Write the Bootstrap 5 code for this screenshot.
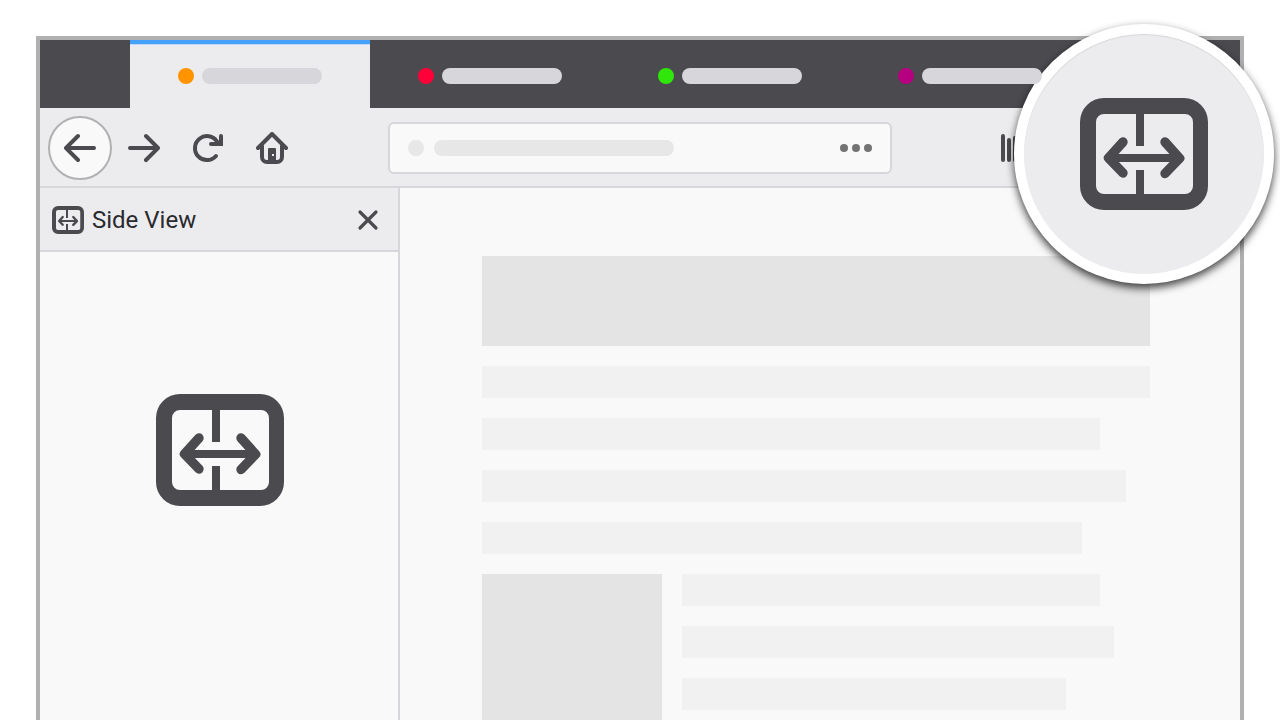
<!DOCTYPE html>
<html lang="en">
<head>
<meta charset="utf-8">
<meta name="viewport" content="width=device-width, initial-scale=1">
<title>Side View</title>
<link href="https://cdn.jsdelivr.net/npm/bootstrap@5.3.0/dist/css/bootstrap.min.css" rel="stylesheet">
<style>
  :root { --ink: #4a4a4f; --chrome: #ececee; --line: #d7d7db; --paper: #f9f9f9; }
  body { background: #fff; font-family: Roboto, "Liberation Sans", sans-serif; color: #2a2a2e; }
  svg { display: block; }
  .page-frame { padding: 36px 36px 0; }
  .browser { border: 4px solid #b1b1b1; border-bottom: 0; background: var(--paper); }
  .tab-strip { background: var(--ink); height: 68px; padding-left: 90px; }
  .tab-item { flex: 0 0 240px; border: 0; background: transparent; padding: 4px 0 0; }
  .tab-item.active { background: var(--chrome); box-shadow: inset 0 4px #45a1ff, inset 0 5px #bcd8f8; }
  .pill { height: 16px; border-radius: 8px; background: var(--line); }
  .dot { width: 16px; height: 16px; border-radius: 50%; flex: none; }
  .tab-item .pill { width: 120px; }
  .above-lens { position: relative; z-index: 3; }
  .toolbar { height: 80px; background: var(--chrome); box-shadow: inset 0 -2px var(--line); padding-left: 8px; }
  .tool { width: 64px; height: 64px; flex: none; border: 0; padding: 0; background: transparent; color: var(--ink); border-radius: 50%; }
  .tool-back { background: var(--paper); border: 2px solid #b1b1b3; }
  .address { height: 52px; margin-left: 84px; margin-right: 92px; padding: 0 18px; background: var(--paper); border: 2px solid var(--line); border-radius: 6px; }
  .address .pill, .address .dot { background: #e7e7e8; }
  .address .pill { width: 240px; margin-left: 10px; }
  .tools-end { width: 256px; }
  .more { border: 0; background: none; padding: 0; color: #737373; }
  .side { width: 360px; flex: none; border-right: 2px solid var(--line); }
  .side-head { height: 64px; background: var(--chrome); box-shadow: inset 0 -2px var(--line); padding: 0 12px; }
  .side-title { font-size: 24px; line-height: 32px; font-weight: 400; }
  .side-close { border: 0; background: none; padding: 0; color: var(--ink); }
  .side-art { padding: 142px 0 0 2px; color: var(--ink); }
  .ink { color: var(--ink); }
  .article { padding: 68px 90px 0 82px; gap: 20px; }
  .hero { height: 90px; background: #e4e4e4; }
  .figure-box { width: 180px; flex: none; background: #e4e4e4; }
  .text-line { height: 32px; background: #f1f1f1; }
  .lines { gap: 20px; }
  .lens { position: absolute; top: 24px; right: 6px; z-index: 2; width: 260px; height: 260px; border: 10px solid #fff; border-radius: 50%; background: var(--chrome); color: var(--ink); box-shadow: 0 4px 8px rgba(0,0,0,.75), inset 0 1px 1px rgba(0,0,0,.1); }
</style>
</head>
<body>
<svg width="0" height="0" class="position-absolute" aria-hidden="true">
  <symbol id="side-view" viewBox="0 0 128 112">
    <path fill="currentColor" fill-rule="evenodd" d="M24 0H104A24 24 0 0 1 128 24V88A24 24 0 0 1 104 112H24A24 24 0 0 1 0 88V24A24 24 0 0 1 24 0ZM24 16A8 8 0 0 0 16 24V88A8 8 0 0 0 24 96H105A8 8 0 0 0 113 88V24A8 8 0 0 0 105 16Z"/>
    <path fill="currentColor" d="M56 14h8v34h-8zM56 72h8v26h-8zM30 56h70v8H30z"/>
    <path fill="none" stroke="currentColor" stroke-width="9.4" stroke-linecap="round" stroke-linejoin="round" d="M43 44L28.500 60L43 75M85 44L99.700 60.300L85 75.500"/>
  </symbol>
</svg>

<div class="page-frame min-vh-100 d-flex flex-column position-relative">
  <div class="browser flex-grow-1 d-flex flex-column">
    <div class="tab-strip d-flex" role="tablist" aria-label="Tabs">
      <button class="tab-item active d-flex align-items-center justify-content-center gap-2" role="tab" aria-selected="true" aria-label="Tab 1"><span class="dot" style="background:#ff9400"></span><span class="pill"></span></button>
      <button class="tab-item d-flex align-items-center justify-content-center gap-2" role="tab" aria-label="Tab 2"><span class="dot" style="background:#ff0039"></span><span class="pill"></span></button>
      <button class="tab-item d-flex align-items-center justify-content-center gap-2" role="tab" aria-label="Tab 3"><span class="dot" style="background:#30e60b"></span><span class="pill"></span></button>
      <button class="tab-item d-flex align-items-center justify-content-center gap-2" role="tab" aria-label="Tab 4"><span class="dot" style="background:#b5007f"></span><span class="pill above-lens"></span></button>
    </div>

    <div class="toolbar d-flex align-items-center">
      <button class="tool tool-back d-flex align-items-center justify-content-center" aria-label="Back">
        <svg width="32" height="32" viewBox="0 0 16 16" fill="currentColor"><path d="M15 7H3.414l4.293-4.293a1 1 0 0 0-1.414-1.414l-6 6a1 1 0 0 0 0 1.414l6 6a1 1 0 0 0 1.414-1.414L3.414 9H15a1 1 0 0 0 0-2z"/></svg>
      </button>
      <button class="tool d-flex align-items-center justify-content-center" aria-label="Forward">
        <svg width="32" height="32" viewBox="0 0 16 16" fill="currentColor"><path d="M15.707 7.293l-6-6a1 1 0 0 0-1.414 1.414L12.586 7H1a1 1 0 0 0 0 2h11.586l-4.293 4.293a1 1 0 1 0 1.414 1.414l6-6a1 1 0 0 0 0-1.414z"/></svg>
      </button>
      <button class="tool d-flex align-items-center justify-content-center" aria-label="Reload">
        <svg width="32" height="32" viewBox="0 0 32 32" fill="none" stroke="currentColor" stroke-width="4" stroke-linecap="round"><path d="M24 24A12 12 0 1 1 25 9.500"/><path d="M29 4V12H19"/><path d="M23 7L29 10V13H24z" fill="currentColor" stroke="none"/></svg>
      </button>
      <button class="tool d-flex align-items-center justify-content-center" aria-label="Home">
        <svg width="32" height="32" viewBox="0 0 32 32" fill="none" stroke="currentColor" stroke-width="4" stroke-linecap="round" stroke-linejoin="round"><path d="M2 16L16 2L30 16M6 14V25A5 5 0 0 0 11 30H21A5 5 0 0 0 26 25V14"/><path fill="currentColor" stroke="none" fill-rule="evenodd" d="M13 16h6a1 1 0 0 1 1 1v12h-8V17a1 1 0 0 1 1-1zM16 22v2h2v-2z"/></svg>
      </button>
      <div class="address d-flex align-items-center flex-grow-1">
        <span class="dot"></span><span class="pill"></span>
        <button class="more ms-auto" aria-label="Page actions"><svg width="32" height="8" viewBox="0 0 32 8" fill="currentColor"><circle cx="4" cy="4" r="4"/><circle cx="16" cy="4" r="4"/><circle cx="28" cy="4" r="4"/></svg></button>
      </div>
      <div class="tools-end d-flex">
        <button class="tool d-flex align-items-center justify-content-center" aria-label="Library">
          <svg width="32" height="32" viewBox="0 0 32 32" fill="none" stroke="currentColor" stroke-width="4" stroke-linecap="round"><path d="M3 4V28M9 8V28M15 6V28M21 6L28 28"/></svg>
        </button>
      </div>
    </div>

    <div class="d-flex flex-grow-1">
      <aside class="side">
        <header class="side-head d-flex align-items-center gap-2">
          <svg class="ink" width="32" height="28" aria-hidden="true"><use href="#side-view"/></svg>
          <h1 class="side-title mb-0">Side View</h1>
          <button class="side-close ms-auto" aria-label="Close sidebar"><svg width="36" height="32" viewBox="0 0 36 32" fill="none" stroke="currentColor" stroke-width="3.200" stroke-linecap="round"><path d="M10 8L26 24M26 8L10 24"/></svg></button>
        </header>
        <div class="side-art d-flex justify-content-center">
          <svg width="128" height="112" role="img" aria-label="Side View"><use href="#side-view"/></svg>
        </div>
      </aside>
      <main class="article flex-grow-1 d-flex flex-column">
        <div class="hero"></div>
        <div class="text-line"></div>
        <div class="text-line" style="width:calc(100% - 50px)"></div>
        <div class="text-line" style="width:calc(100% - 24px)"></div>
        <div class="text-line" style="width:calc(100% - 68px)"></div>
        <div class="lines d-flex flex-grow-1">
          <div class="figure-box"></div>
          <div class="lines d-flex flex-column flex-grow-1">
            <div class="text-line" style="width:calc(100% - 50px)"></div>
            <div class="text-line" style="width:calc(100% - 36px)"></div>
            <div class="text-line" style="width:calc(100% - 84px)"></div>
          </div>
        </div>
      </main>
    </div>
  </div>
  <div class="lens d-flex align-items-center justify-content-center">
    <svg width="128" height="112" role="img" aria-label="Side View button"><use href="#side-view"/></svg>
  </div>
</div>
<script src="https://cdn.jsdelivr.net/npm/bootstrap@5.3.0/dist/js/bootstrap.bundle.min.js"></script>
</body>
</html>
